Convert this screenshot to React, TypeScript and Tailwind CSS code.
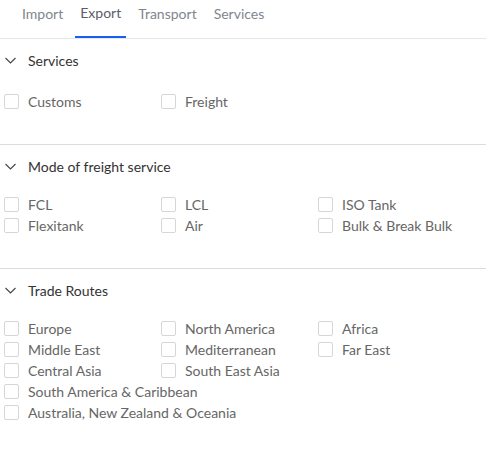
const tabs = ['Import', 'Export', 'Transport', 'Services'];

const sections: { title: string; items: string[][] }[] = [
  { title: 'Services', items: [['Customs', 'Freight']] },
  {
    title: 'Mode of freight service',
    items: [
      ['FCL', 'LCL', 'ISO Tank'],
      ['Flexitank', 'Air', 'Bulk & Break Bulk'],
    ],
  },
  {
    title: 'Trade Routes',
    items: [
      ['Europe', 'North America', 'Africa'],
      ['Middle East', 'Mediterranean', 'Far East'],
      ['Central Asia', 'South East Asia'],
      ['South America & Caribbean'],
      ['Australia, New Zealand & Oceania'],
    ],
  },
];

function Chevron() {
  return (
    <svg width="11" height="7" viewBox="0 0 11 7" fill="none" className="ml-[5px] mr-[12px]">
      <path d="M0.5 1l5 5 5-5" stroke="#444" strokeWidth="1.1" />
    </svg>
  );
}

function Check({ label }: { label: string }) {
  return (
    <label className="flex h-[21px] w-[157px] items-center">
      <span className="h-[15px] w-[15px] shrink-0 rounded-[2px] border border-[#d6d6d6] bg-white" />
      <span className="ml-[9px] whitespace-nowrap text-[14px] text-[#666]">{label}</span>
    </label>
  );
}

export default function App() {
  return (
    <div className="w-[486px] bg-white font-['Lato','Liberation_Sans',sans-serif]">
      <div className="flex h-[39px] items-start gap-[7px] border-b border-[#e6e6e6] pl-[17px]">
        {tabs.map((t) => (
          <div
            key={t}
            className={
              t === 'Export'
                ? 'flex h-[38px] items-center border-b-2 border-[#1560f0] px-[5px] pb-[11px] text-[14px] text-[#5a6069]'
                : 'flex h-[38px] items-center px-[5px] pb-[11px] text-[14px] text-[#80868e]'
            }
          >
            {t}
          </div>
        ))}
      </div>
      {sections.map((s, i) => (
        <div
          key={s.title}
          className={i < sections.length - 1 ? 'border-b border-[#dcdcdc] pb-[32px] pt-[11px]' : 'pb-[32px] pt-[11px]'}
        >
          <div className="flex h-[20px] items-center">
            <Chevron />
            <span className="text-[14px] text-[#333]">{s.title}</span>
          </div>
          <div className={i === 0 ? 'mt-[21px] pl-[4px]' : 'mt-[18px] pl-[4px]'}>
            {s.items.map((row, r) => (
              <div key={r} className="flex">
                {row.map((it) => (
                  <Check key={it} label={it} />
                ))}
              </div>
            ))}
          </div>
        </div>
      ))}
    </div>
  );
}
